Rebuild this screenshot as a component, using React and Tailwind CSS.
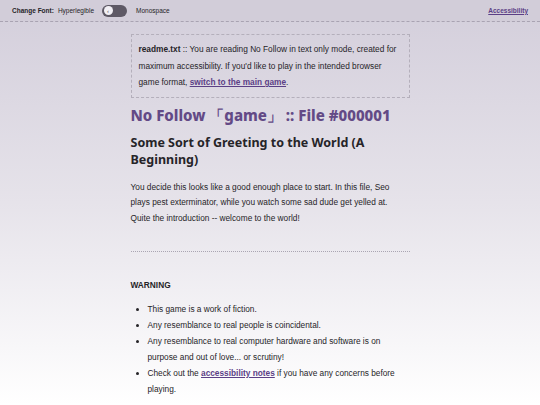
import React from "react";

export default function App() {
  return (
    <div
      className="w-[540px] h-[405px] overflow-hidden bg-gradient-to-b from-[#d3cedb] via-[#e6e3ea] to-[#ffffff] text-[#262428]"
      style={{ fontFamily: '"Liberation Sans", Arial, sans-serif' }}
    >
      <header className="h-[22px] flex items-center justify-between px-[12px] border-b border-dashed border-[#a9a3b2] bg-[#d2cdd9]">
        <div className="flex items-center text-[6.5px]">
          <span className="font-bold mr-[4px]">Change Font:</span>
          <span>Hyperlegible</span>
          <div className="ml-[8px] mr-[9px] w-[25px] h-[12px] rounded-full bg-[#5e5965] flex items-center px-[1.5px]">
            <div className="w-[9px] h-[9px] rounded-full bg-[#f2f0f5] flex items-center justify-center text-[6px] leading-none text-[#555]">‹</div>
          </div>
          <span>Monospace</span>
        </div>
        <a className="text-[6.5px] font-bold text-[#5b3f86] underline">Accessibility</a>
      </header>

      <main className="w-[279px] mx-auto pt-[12px]">
        <div className="border border-dashed border-[#b4afbb] px-[7px] py-[6px] text-[8.3px] leading-[16.5px]">
          <b>readme.txt</b> :: You are reading No Follow in text only mode, created for maximum accessibility. If you'd like to play in the intended browser game format,{" "}
          <a className="font-bold text-[#5b3f86] underline">switch to the main game</a>.
        </div>

        <h1
          className="mt-[6px] text-[15px] font-extrabold text-[#634a86] leading-[22px]"
          style={{ fontFamily: '"Noto Sans", sans-serif' }}
        >
          No Follow 「game」 :: File #000001
        </h1>
        <h2
          className="mt-[8px] text-[12.5px] font-bold leading-[17px]"
          style={{ fontFamily: '"Noto Sans", sans-serif' }}
        >
          Some Sort of Greeting to the World (A Beginning)
        </h2>
        <p className="mt-[12px] text-[8.3px] leading-[15.5px]">
          You decide this looks like a good enough place to start. In this file, Seo plays pest exterminator, while you watch some sad dude get yelled at. Quite the introduction -- welcome to the world!
        </p>

        <hr className="mt-[25px] border-0 border-t border-dotted border-[#aaa5b2]" />

        <h3 className="mt-[25px] text-[8.3px] font-bold leading-[16px]">WARNING</h3>
        <ul className="mt-[8px] ml-[17px] list-disc text-[8.3px] leading-[16px]">
          <li>This game is a work of fiction.</li>
          <li>Any resemblance to real people is coincidental.</li>
          <li>Any resemblance to real computer hardware and software is on purpose and out of love... or scrutiny!</li>
          <li>
            Check out the <a className="font-bold text-[#5b3f86] underline">accessibility notes</a> if you have any concerns before playing.
          </li>
        </ul>
      </main>
    </div>
  );
}
